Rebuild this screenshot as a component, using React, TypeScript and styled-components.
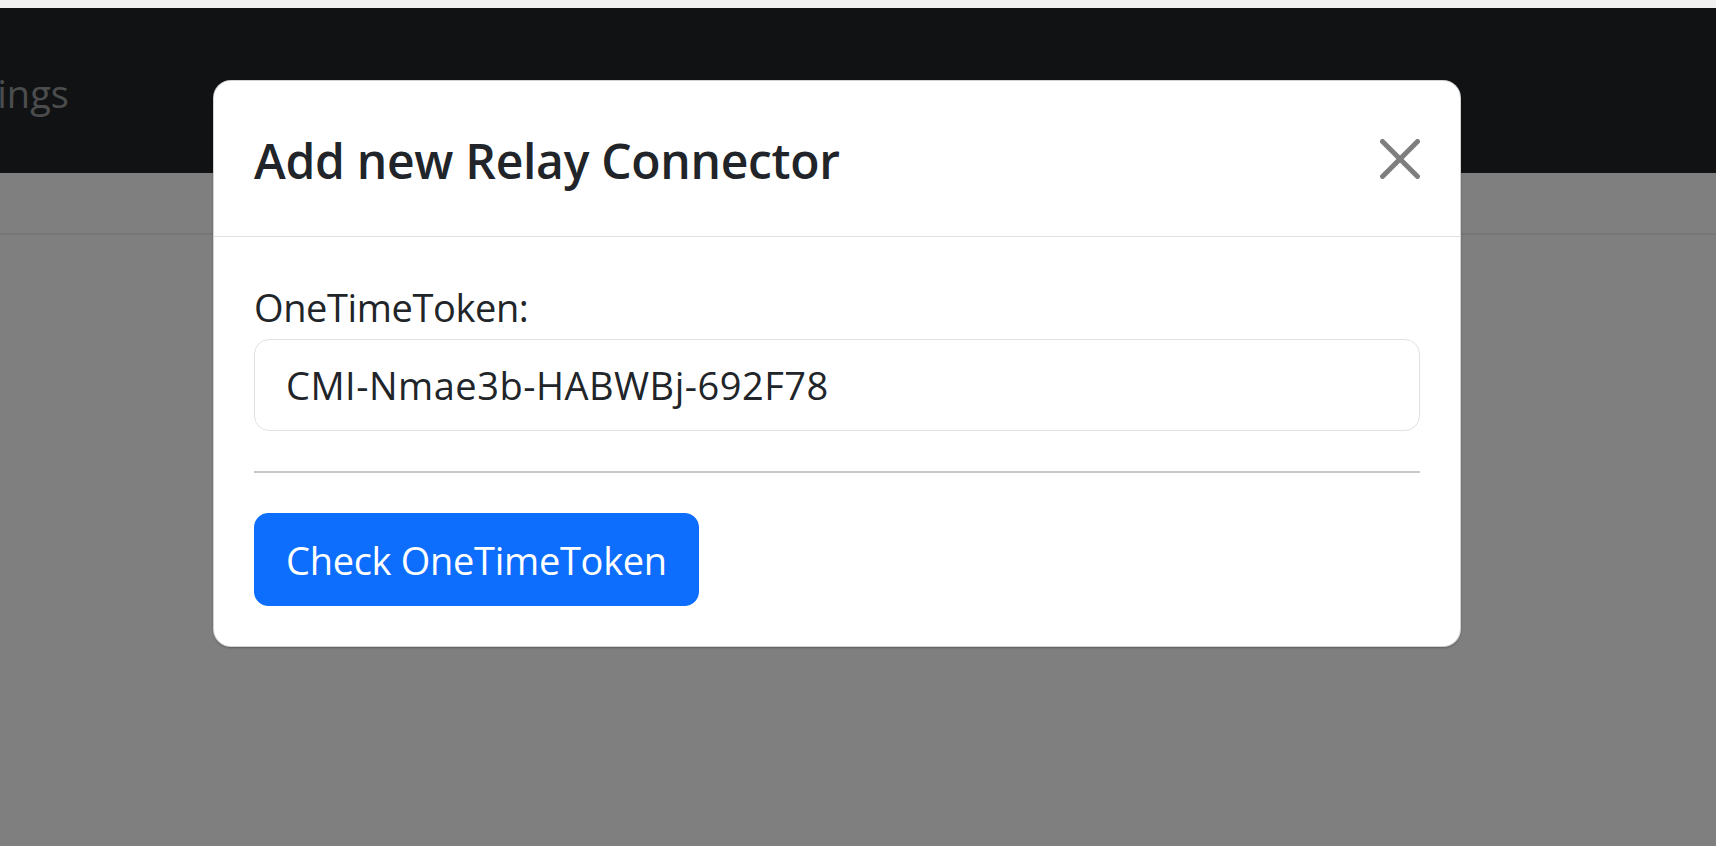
import React from "react";
import styled, { createGlobalStyle } from "styled-components";

const GlobalStyle = createGlobalStyle`
  html, body {
    margin: 0;
    padding: 0;
    height: 100%;
    overflow: hidden;
    background: #f1f1f1;
  }
  #root { height: 100%; }
  * { box-sizing: border-box; }
`;

const FONT = `"Open Sans", "Noto Sans", "Liberation Sans", sans-serif`;

const Page = styled.div`
  height: 100%;
  display: flex;
  flex-direction: column;
  font-family: ${FONT};
  color: #212529;
`;

const TopStrip = styled.div`
  height: 8px;
  flex: none;
  background: #f1f1f1;
`;

const Viewport = styled.div`
  position: relative;
  flex: 1;
  background: #ffffff;
  overflow: hidden;
`;

const Navbar = styled.nav`
  height: 165px;
  padding-top: 6px;
  background: #212529;
  display: flex;
  align-items: center;
  overflow: hidden;
`;

const NavLink = styled.a<{ $shift: number }>`
  margin-left: ${(p) => -p.$shift}px;
  font-size: 38px;
  line-height: 1.5;
  color: rgba(255, 255, 255, 0.55);
  text-decoration: none;
  white-space: nowrap;
`;

const SubHeader = styled.div`
  height: 62px;
  border-bottom: 2px solid #e9ecef;
`;

const Backdrop = styled.div`
  position: absolute;
  inset: 0;
  background: rgba(0, 0, 0, 0.5);
  display: flex;
  align-items: flex-start;
`;

const Dialog = styled.div`
  margin: 72px 0 0 213px;
  width: 1248px;
  background: #ffffff;
  border: 1px solid rgba(0, 0, 0, 0.175);
  border-radius: 18px;
  box-shadow: 0 1px 2px rgba(0, 0, 0, 0.25);
  display: flex;
  flex-direction: column;
`;

const Header = styled.div`
  display: flex;
  align-items: center;
  padding: 42px 40px 38px;
  border-bottom: 1px solid #dee2e6;
`;

const Title = styled.h5`
  margin: 0;
  font-size: 48px;
  font-weight: 600;
  line-height: 75px;
  color: #212529;
  letter-spacing: -0.3px;
`;

const CloseButton = styled.button`
  margin-left: auto;
  margin-top: -4px;
  width: 40px;
  height: 40px;
  padding: 0;
  border: 0;
  background: transparent;
  display: flex;
  align-items: center;
  justify-content: center;
  opacity: 0.5;
  cursor: pointer;
`;

const Body = styled.div`
  padding: 40px;
  display: flex;
  flex-direction: column;
`;

const Label = styled.label`
  font-size: 38px;
  line-height: 60px;
  margin-bottom: 2px;
  letter-spacing: -0.4px;
  color: #212529;
`;

const Input = styled.input`
  height: 92px;
  width: 100%;
  padding: 15px 31px;
  font-family: ${FONT};
  font-size: 38px;
  line-height: 60px;
  letter-spacing: 0.5px;
  color: #212529;
  background: #ffffff;
  border: 1px solid #dee2e6;
  border-radius: 15px;
  outline: none;
`;

const Divider = styled.hr`
  margin: 40px 0;
  border: 0;
  border-top: 2px solid rgba(33, 37, 41, 0.25);
`;

const PrimaryButton = styled.button`
  align-self: flex-start;
  height: 93px;
  padding: 15px 31px;
  font-family: ${FONT};
  font-size: 38px;
  line-height: 60px;
  letter-spacing: -0.3px;
  color: #ffffff;
  background: #0d6efd;
  border: 1px solid #0d6efd;
  border-radius: 14px;
  cursor: pointer;
`;

export default function App() {
  return (
    <Page>
      <GlobalStyle />
      <TopStrip />
      <Viewport>
        <Navbar>
          <NavLink href="#" $shift={72}>Settings</NavLink>
        </Navbar>
        <SubHeader />
        <Backdrop>
          <Dialog role="dialog" aria-modal="true">
            <Header>
              <Title>Add new Relay Connector</Title>
              <CloseButton aria-label="Close">
                <svg width="40" height="40" viewBox="0 0 16 16" fill="#000">
                  <path d="M.293.293a1 1 0 0 1 1.414 0L8 6.586 14.293.293a1 1 0 1 1 1.414 1.414L9.414 8l6.293 6.293a1 1 0 0 1-1.414 1.414L8 9.414l-6.293 6.293a1 1 0 0 1-1.414-1.414L6.586 8 .293 1.707a1 1 0 0 1 0-1.414z" />
                </svg>
              </CloseButton>
            </Header>
            <Body>
              <Label htmlFor="ott">OneTimeToken:</Label>
              <Input id="ott" defaultValue="CMI-Nmae3b-HABWBj-692F78" />
              <Divider />
              <PrimaryButton>Check OneTimeToken</PrimaryButton>
            </Body>
          </Dialog>
        </Backdrop>
      </Viewport>
    </Page>
  );
}
